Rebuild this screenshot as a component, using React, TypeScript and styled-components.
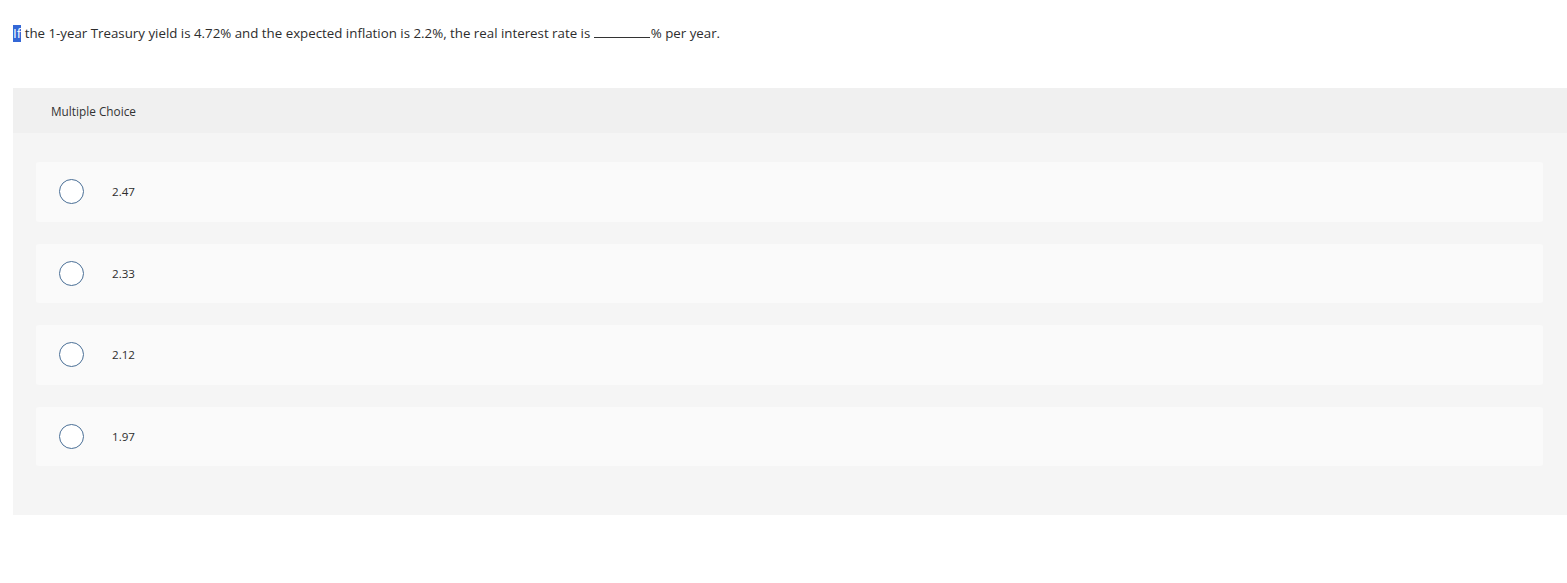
import styled, { createGlobalStyle } from 'styled-components';

const GlobalStyle = createGlobalStyle`
  body {
    margin: 0;
    background: #fff;
    font-family: "Open Sans", Lato, sans-serif;
    color: #2d2d2d;
  }
`;

const choices = ['2.47', '2.33', '2.12', '1.97'];

const App = () => {
  return (
    <>
      <GlobalStyle />
      <Page>
        <Question>
          <Selected>If</Selected> the 1-year Treasury yield is 4.72% and the expected inflation is 2.2%, the real
          interest rate is <Blank />% per year.
        </Question>
        <Panel>
          <PanelHeader>Multiple Choice</PanelHeader>
          <ChoiceList>
            {choices.map((c) => (
              <Choice key={c}>
                <Radio />
                <ChoiceLabel>{c}</ChoiceLabel>
              </Choice>
            ))}
          </ChoiceList>
        </Panel>
      </Page>
    </>
  );
};

export default App;

const Page = styled.div`
  padding: 24px 0 0 13px;
`;

const Question = styled.div`
  font-size: 13.3px;
  line-height: 18px;
  color: #2d2d2d;
`;

const Selected = styled.span`
  display: inline-block;
  line-height: 17px;
  background: #3367d6;
  color: #fff;
`;

const Blank = styled.span`
  display: inline-block;
  width: 56px;
  border-bottom: 1px solid #333;
  margin-right: 1px;
`;

const Panel = styled.div`
  margin-top: 46px;
  background: #f5f5f5;
`;

const PanelHeader = styled.div`
  height: 45px;
  display: flex;
  align-items: center;
  padding-left: 38px;
  background: #f0f0f0;
  font-size: 11.8px;
  color: #333;
`;

const ChoiceList = styled.div`
  display: flex;
  flex-direction: column;
  gap: 22px;
  padding: 29px 24px 49px 23px;
`;

const Choice = styled.div`
  height: 59.5px;
  display: flex;
  align-items: center;
  padding-left: 23px;
  background: #fafafa;
  border-radius: 3px;
`;

const Radio = styled.span`
  width: 23px;
  height: 23px;
  border: 1px solid #4a6f96;
  border-radius: 50%;
  background: #fff;
`;

const ChoiceLabel = styled.span`
  margin-left: 28px;
  font-size: 11.6px;
  color: #2d2d2d;
`;
